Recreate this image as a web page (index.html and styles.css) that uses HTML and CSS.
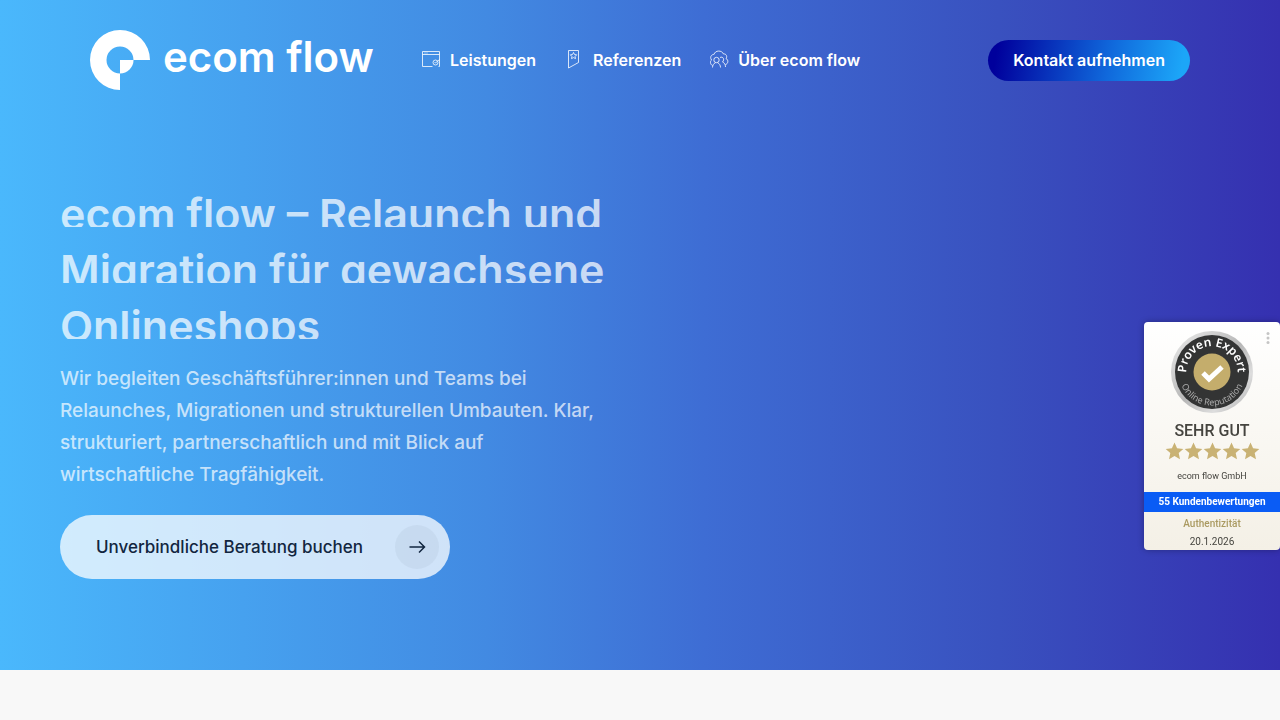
FILE: index.html
```html
<!DOCTYPE html>
<html lang="de">
<head>
<meta charset="utf-8">
<meta name="viewport" content="width=device-width, initial-scale=1">
<title>ecom flow</title>
<link rel="stylesheet" href="styles.css">
</head>
<body>
<div class="hero">
  <header class="header">
    <a class="logo" href="#">
      <svg class="logo-mark" viewBox="0 0 60 60" aria-hidden="true"><path fill="#fff" fill-rule="evenodd" d="M60 30A30 30 0 1 0 30 60V43.500A13.500 13.500 0 1 1 43.500 30Z"/><path fill="#fff" d="M30 30h13.500A13.500 13.500 0 0 1 30 43.500Z"/></svg>
      <span>ecom flow</span>
    </a>
    <nav class="nav">
      <a class="nav-link" href="#">
        <svg class="icon" viewBox="0 0 20 20" aria-hidden="true"><path d="M11.500 16.500h-10v-15h17v15h-1M1.500 4.500h17M3.500 3h1m1 0h1"/><circle cx="14.500" cy="12.500" r="2.500"/><path d="M13.500 12l1 1 4-3.500"/></svg>
        Leistungen</a>
      <a class="nav-link" href="#">
        <svg class="icon" viewBox="0 0 20 20" aria-hidden="true"><path d="M4.500.5h10v12l-10 5.500zM9.500 2.500l1 2 2.200.3-1.600 1.600.4 2.200-2-1-2 1 .4-2.200-1.600-1.600 2.200-.3z"/></svg>
        Referenzen</a>
      <a class="nav-link" href="#">
        <svg class="icon" viewBox="0 0 20 20" aria-hidden="true"><path d="M3.500 15.500C1 14.500 1 11 2.500 10 0 6 4 4 5 4.500 6 0 13 0 14.500 4c3-.5 4 3 2.500 4.500C20 10 19 14 16.500 14.500"/><circle cx="7.500" cy="10" r="2.700"/><path d="M3.500 17.500c0-2 1-4 3-4.800m2 0c2 .8 3 2.800 3 4.800M11 7.500c3-1.500 5 2 2.500 4.500 2 .8 3 2.500 3 5"/></svg>
        Über ecom flow</a>
    </nav>
    <a class="contact" href="#">Kontakt aufnehmen</a>
  </header>
  <main class="intro">
    <h1 class="title"><span class="line">ecom flow – Relaunch und</span> <span class="line">Migration für gewachsene</span> <span class="line">Onlineshops</span></h1>
    <p class="lead">Wir begleiten Geschäftsführer:innen und Teams bei<br>Relaunches, Migrationen und strukturellen Umbauten. Klar,<br>strukturiert, partnerschaftlich und mit Blick auf<br>wirtschaftliche Tragfähigkeit.</p>
    <a class="cta" href="#">Unverbindliche Beratung buchen
      <span class="cta-icon"><svg viewBox="0 0 20 20" aria-hidden="true"><path d="M2.500 10h15M12 4.500l5.500 5.500-5.500 5.500"/></svg></span>
    </a>
  </main>
</div>
<aside class="rating" aria-label="Proven Expert">
  <button class="more" type="button" aria-label="Mehr"><svg viewBox="0 0 4 12"><circle cx="2" cy="1.500" r="1.500"/><circle cx="2" cy="6" r="1.500"/><circle cx="2" cy="10.500" r="1.500"/></svg></button>
  <svg class="seal" viewBox="0 0 84 84">
    <defs>
      <linearGradient id="rim" x1="0" y1="0" x2="1" y2="1"><stop offset="0" stop-color="#eee"/><stop offset=".5" stop-color="#b7b7b7"/><stop offset=".75" stop-color="#ddd"/><stop offset="1" stop-color="#aaa"/></linearGradient>
      <path id="arc-top" d="M17.300 49A25.700 25.700 0 1 1 66.700 49"/>
      <path id="arc-bottom" d="M8.500 42A33.500 33.500 0 0 0 75.500 42"/>
    </defs>
    <circle cx="42" cy="42" r="41" fill="url(#rim)"/>
    <circle cx="42" cy="42" r="37" fill="#333434"/>
    <circle cx="42" cy="42" r="18.500" fill="#c4ad6c"/>
    <path d="M33 43l6 6 13-12" fill="none" stroke="#fff" stroke-width="5"/>
    <text class="seal-top"><textPath href="#arc-top" startOffset="50%">Proven Expert</textPath></text>
    <text class="seal-bottom"><textPath href="#arc-bottom" startOffset="50%">Online Reputation</textPath></text>
  </svg>
  <strong class="grade">SEHR GUT</strong>
  <svg class="stars" viewBox="0 0 95 18" aria-hidden="true">
    <defs><path id="star" d="M9.500.5l2.600 5.700 6.200.7-4.600 4.200 1.300 6.100-5.500-3.100L4 17.200l1.300-6.100L.7 6.900l6.200-.7z"/></defs>
    <use href="#star"/><use href="#star" x="19"/><use href="#star" x="38"/><use href="#star" x="57"/><use href="#star" x="76"/>
  </svg>
  <span class="company">ecom flow GmbH</span>
  <a class="reviews" href="#">55 Kundenbewertungen</a>
  <span class="authentic">Authentizität</span>
  <time class="date" datetime="2026-01-20">20.1.2026</time>
</aside>
</body>
</html>
```
FILE: styles.css
```css
* { box-sizing: border-box; }
body {
  margin: 0;
  min-height: 100vh;
  background: #f8f8f8;
  font-family: Inter, "Liberation Sans", sans-serif;
  color: #fff;
}
a { color: inherit; text-decoration: none; }
.hero {
  padding-bottom: 91px;
  background: linear-gradient(90deg, #4ab8fc 0%, #428ae2 38%, #3e6dd4 55%, #3951bf 78%, #3530b0 100%);
}
.header {
  display: flex;
  align-items: center;
  height: 120px;
  padding: 0 90px;
}
.logo {
  display: flex;
  align-items: center;
  gap: 13px;
  width: 331px;
  font-size: 42px;
  line-height: 52px;
  font-weight: 600;
  white-space: nowrap;
}
.logo span { padding-bottom: 6px; }
.logo-mark { width: 60px; height: 60px; flex: none; }
.nav { display: flex; gap: 28px; }
.nav-link {
  display: flex;
  align-items: center;
  gap: 9px;
  font-size: 16px;
  font-weight: 600;
  line-height: 24px;
  white-space: nowrap;
}
.icon {
  width: 20px;
  height: 20px;
  fill: none;
  stroke: rgba(255, 255, 255, .8);
  stroke-width: 1;
}
.contact {
  margin-left: auto;
  padding: 0 25px;
  border-radius: 21px;
  background: linear-gradient(100deg, #00009c 5%, #1069dc 60%, #1ca6f8 95%);
  font-size: 16px;
  font-weight: 600;
  line-height: 41px;
  white-space: nowrap;
}
.intro { padding: 70px 60px 0; }
.title {
  display: grid;
  gap: 19px;
  margin: 0;
  color: rgba(255, 255, 255, .72);
  font-size: 43px;
  font-weight: 600;
  line-height: 48px;
}
.line {
  height: 37px;
  overflow: hidden;
  white-space: nowrap;
}
.lead {
  margin: 24px 0;
  color: rgba(255, 255, 255, .7);
  font-size: 19px;
  font-weight: 500;
  line-height: 32px;
}
.cta {
  display: inline-flex;
  align-items: center;
  justify-content: space-between;
  width: 390px;
  height: 64px;
  padding: 0 11px 0 36px;
  border-radius: 32px;
  background: rgba(255, 255, 255, .75);
  color: #12263f;
  font-size: 17px;
  font-weight: 500;
  vertical-align: top;
  white-space: nowrap;
}
.cta-icon {
  display: grid;
  place-items: center;
  width: 44px;
  height: 44px;
  border-radius: 50%;
  background: rgba(60, 90, 110, .06);
}
.cta-icon svg {
  width: 20px;
  height: 20px;
  fill: none;
  stroke: #12263f;
  stroke-width: 1.500;
}
.rating {
  position: fixed;
  top: 322px;
  right: 0;
  display: flex;
  flex-direction: column;
  align-items: center;
  width: 136px;
  padding-top: 8px;
  border-radius: 4px;
  overflow: hidden;
  background: linear-gradient(#fff, #f4f0e6);
  box-shadow: 0 0 6px rgba(0, 0, 0, .3);
  color: #45443f;
  font-family: Roboto, "Open Sans", sans-serif;
  font-size: 10px;
  line-height: 18px;
}
.more {
  position: absolute;
  top: 10px;
  right: 10px;
  display: flex;
  padding: 0;
  border: 0;
  background: none;
}
.more svg { width: 4px; height: 12px; fill: #c5c5c5; }
.seal { width: 84px; height: 84px; }
.seal-top {
  fill: #fff;
  font-family: "Noto Sans", sans-serif;
  font-size: 12px;
  font-weight: 600;
  text-anchor: middle;
}
.seal-bottom {
  fill: #aaa;
  font-family: "Noto Sans", sans-serif;
  font-size: 9px;
  text-anchor: middle;
}
.grade {
  padding-top: 6px;
  font-size: 16px;
  font-weight: 500;
  line-height: 22px;
}
.stars { width: 95px; height: 18px; fill: #c9b274; }
.company { padding: 7px 0; font-size: 9px; }
.reviews {
  align-self: stretch;
  background: #0a5cf5;
  color: #fff;
  font-weight: 700;
  line-height: 20px;
  text-align: center;
}
.authentic { padding-top: 2px; color: #aa9a61; font-weight: 500; line-height: 20px; }
.date { line-height: 16px; }
```
